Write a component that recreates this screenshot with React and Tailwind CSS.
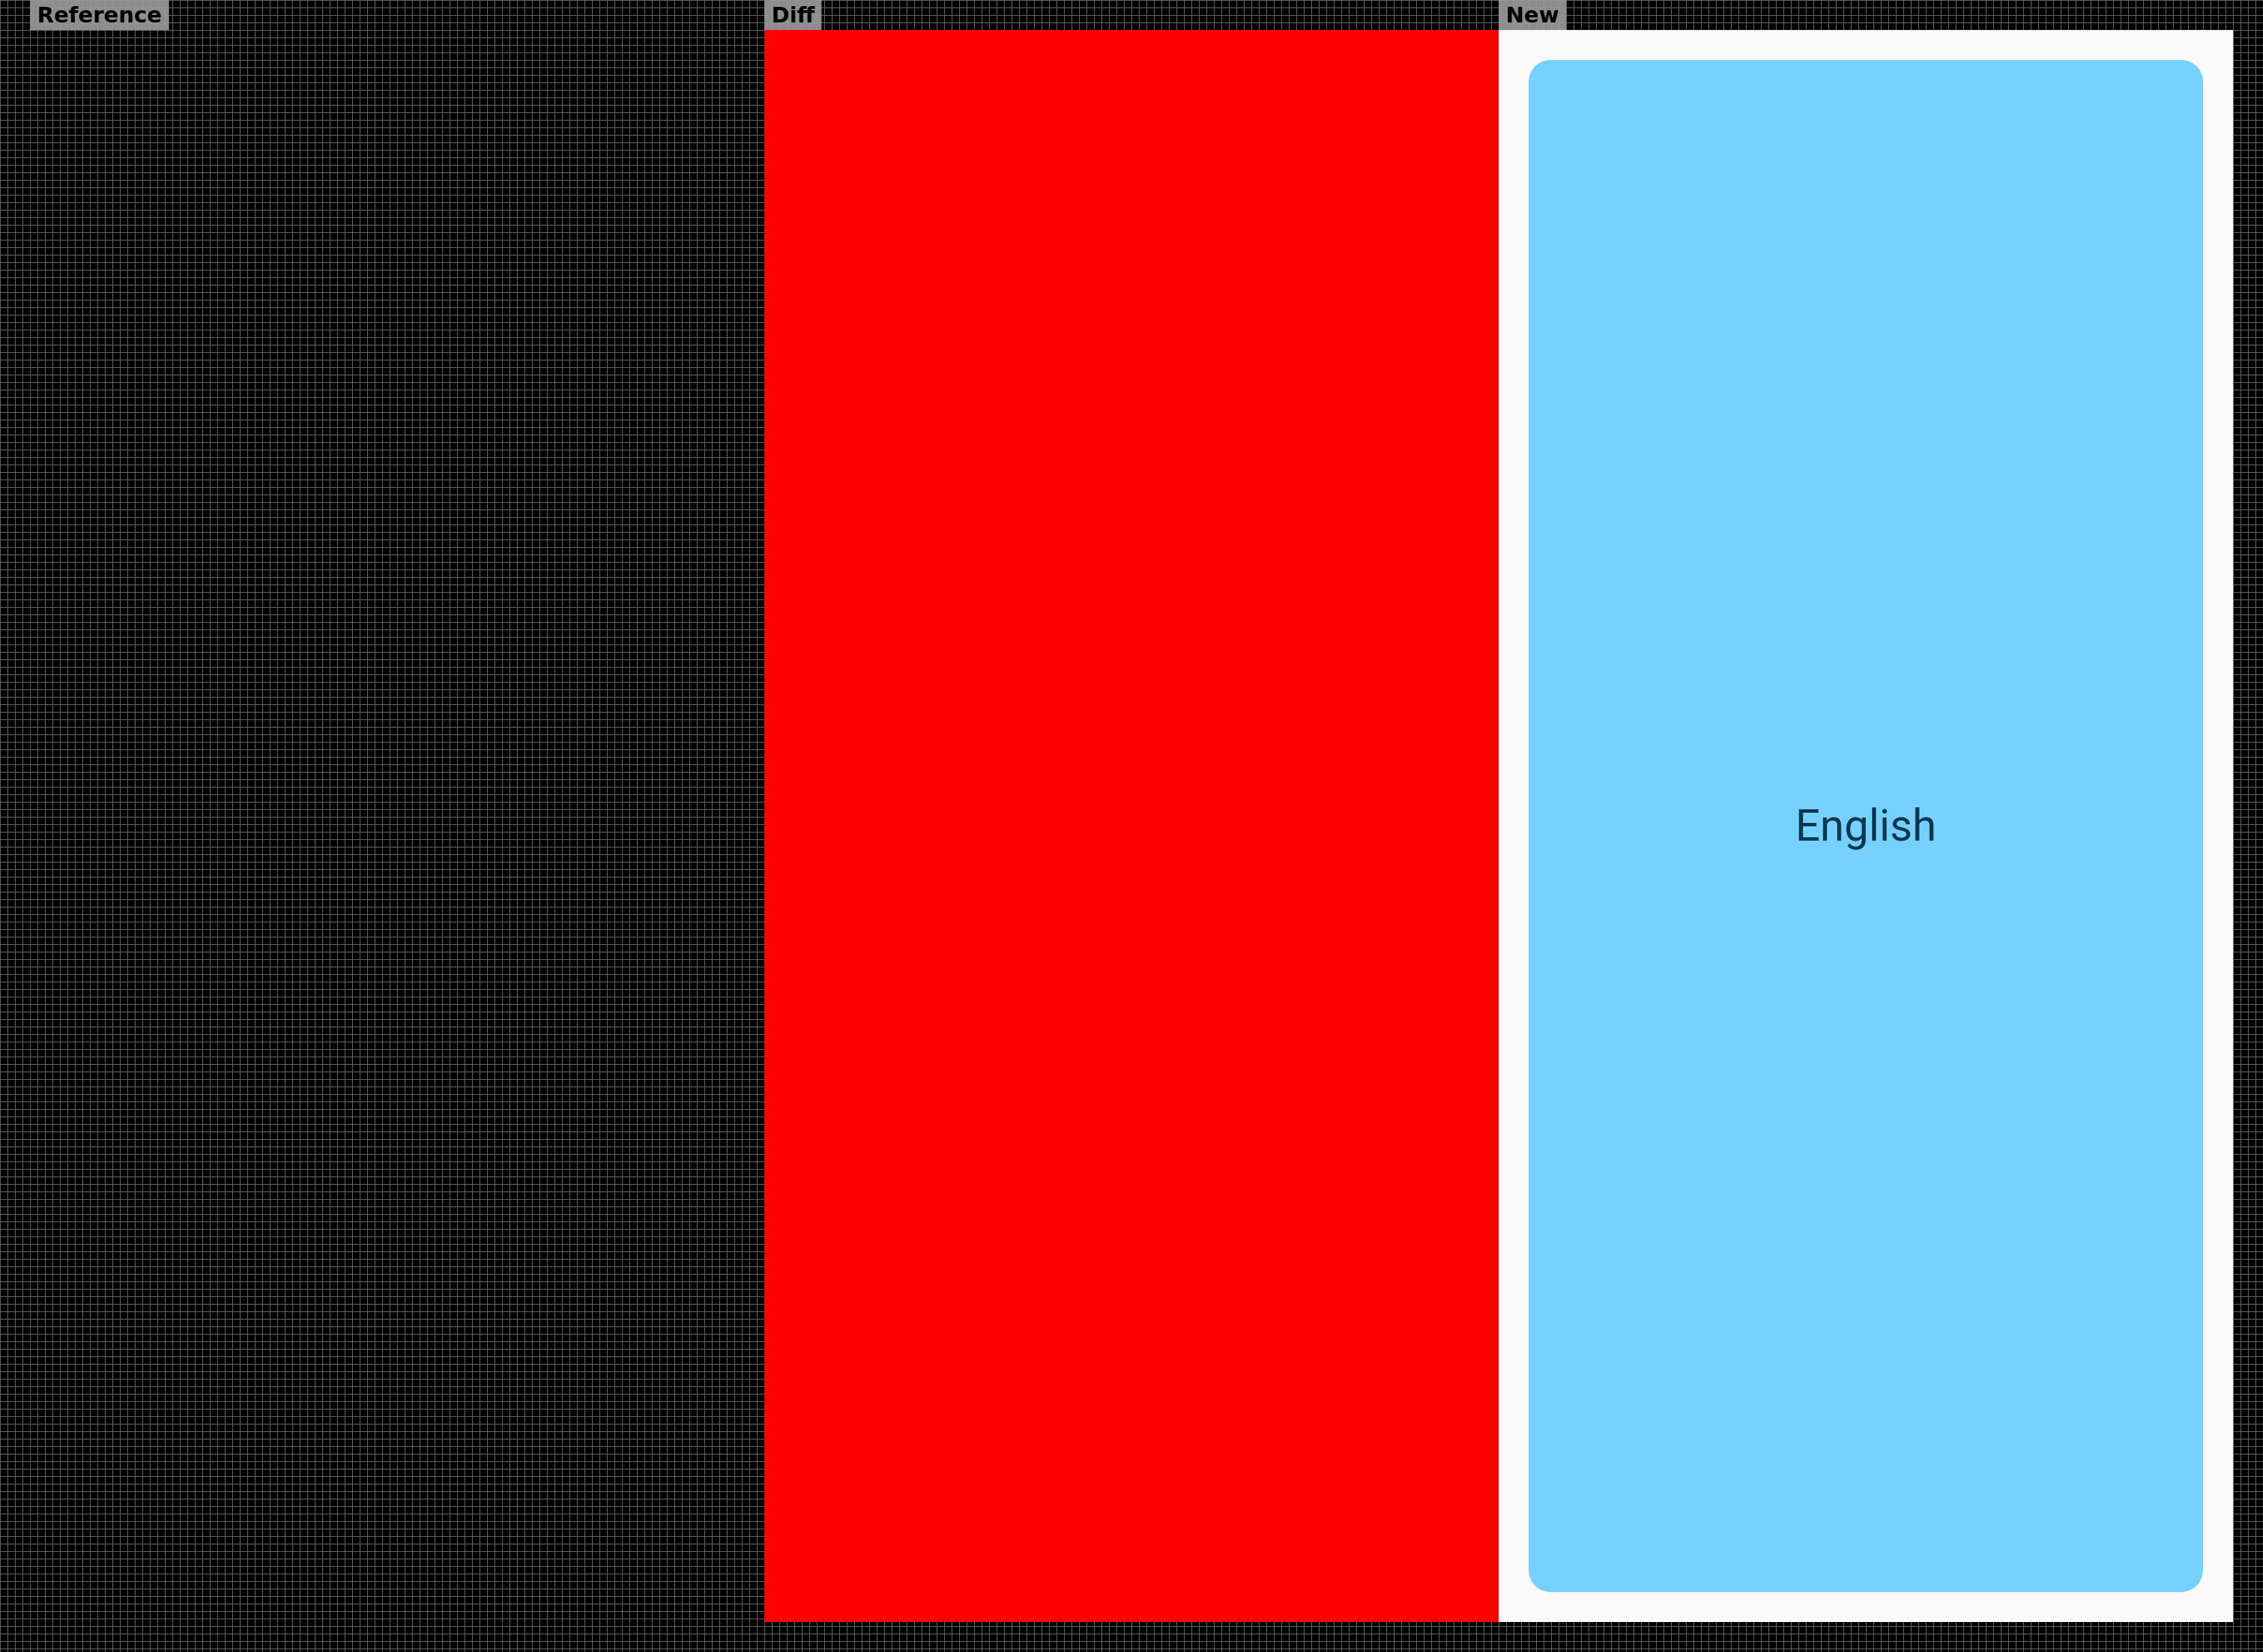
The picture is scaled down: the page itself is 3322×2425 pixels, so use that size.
export default function App() {
  const panels = [
    { label: 'Reference', kind: 'ref' },
    { label: 'Diff', kind: 'diff' },
    { label: 'New', kind: 'new' },
  ];

  return (
    <div className="w-[3322px] h-[2425px] bg-black bg-[image:linear-gradient(to_right,#6e6e6e_1px,transparent_1px),linear-gradient(to_bottom,#6e6e6e_1px,transparent_1px)] bg-[size:11px_11px] flex pl-[44px]">
      {panels.map((p) => (
        <div key={p.label} className="w-[1078px] flex flex-col">
          <div className="self-start h-[44px] px-[10.5px] bg-[#999999]/[0.92] text-black text-[32px] leading-[44px] font-bold font-['DejaVu_Sans',sans-serif]">
            {p.label}
          </div>
          {p.kind === 'ref' && <div className="h-[2337px]" />}
          {p.kind === 'diff' && <div className="h-[2337px] bg-[#ff0000]" />}
          {p.kind === 'new' && (
            <div className="h-[2337px] bg-[#fafafa] p-[44px] flex">
              <div className="flex-1 rounded-[32px] bg-[#76d0fe] flex items-center justify-center">
                <span className="text-[64px] text-[#08384e] font-['Roboto',sans-serif]">English</span>
              </div>
            </div>
          )}
        </div>
      ))}
    </div>
  );
}
